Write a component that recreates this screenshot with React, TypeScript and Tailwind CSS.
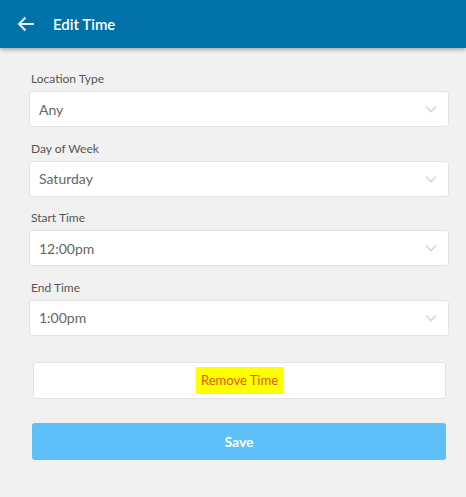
import React from "react";

const fields = [
  { label: "Location Type", value: "Any" },
  { label: "Day of Week", value: "Saturday" },
  { label: "Start Time", value: "12:00pm" },
  { label: "End Time", value: "1:00pm" },
];

function Chevron() {
  return (
    <svg width="12" height="8" viewBox="0 0 12 8" fill="none">
      <path d="M1 1.5L6 6.5L11 1.5" stroke="#d6d6d6" strokeWidth="1.6" />
    </svg>
  );
}

export default function App() {
  return (
    <div className="w-[466px] h-[497px] bg-[#f1f1f1] font-['Lato',sans-serif] overflow-hidden">
      <div className="h-[48px] bg-[#0072a8] flex items-center shadow-[0_2px_4px_rgba(0,0,0,0.3)] relative z-10">
        <svg className="ml-[17px]" width="18" height="16" viewBox="0 0 18 16" fill="none">
          <path d="M17 8H2M8.5 1.5L2 8l6.5 6.5" stroke="#e8f2f8" strokeWidth="2" />
        </svg>
        <span className="ml-[18px] text-white text-[15px] font-semibold">Edit Time</span>
      </div>
      <div className="px-[29px] pt-[23px] flex flex-col gap-[13.6px]">
        {fields.map((f) => (
          <div key={f.label} className="flex flex-col">
            <div className="text-[12px] text-[#555] leading-[16px] mb-[4px] pl-[2px]">{f.label}</div>
            <div className="h-[36px] w-[420px] bg-white border border-[#e3e3e3] rounded-[3px] flex items-center justify-between pl-[9px] pr-[11px]">
              <span className="text-[14px] text-[#666]">{f.value}</span>
              <Chevron />
            </div>
          </div>
        ))}
      </div>
      <div className="px-[32px] pt-[26px] flex flex-col gap-[24px]">
        <div className="h-[37px] w-[413px] ml-[1px] bg-white border border-[#e3e3e3] rounded-[3px] flex items-center justify-center">
          <span className="bg-[#ffff00] text-[#e5580a] text-[13px] px-[5px] py-[4px]">Remove Time</span>
        </div>
        <div className="h-[37px] w-[414px] bg-[#5dc0f8] rounded-[3px] flex items-center justify-center">
          <span className="text-white text-[14px] font-bold">Save</span>
        </div>
      </div>
    </div>
  );
}
